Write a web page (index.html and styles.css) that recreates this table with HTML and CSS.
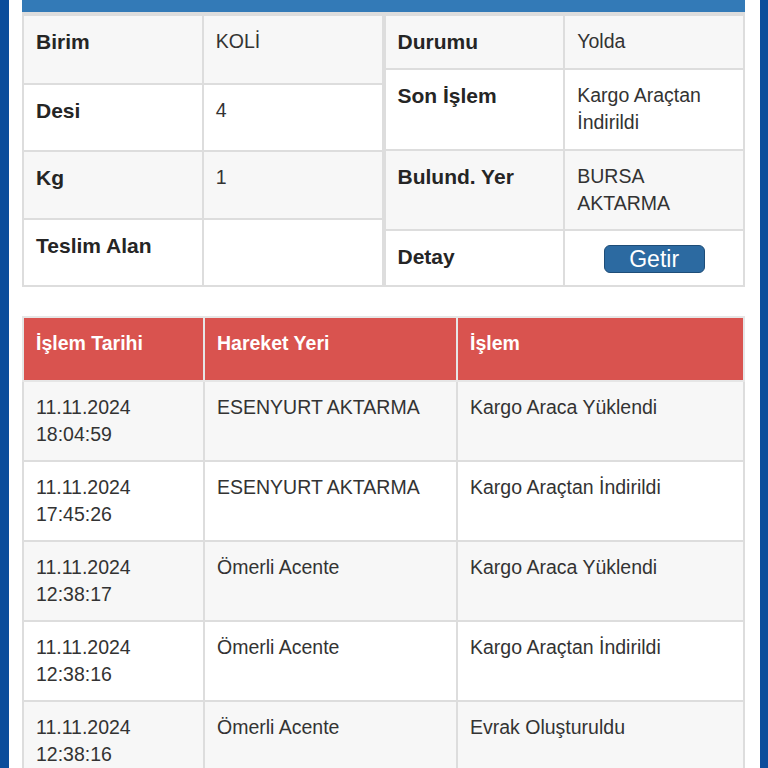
FILE: index.html
```html
<!DOCTYPE html>
<html lang="tr">
<head>
<meta charset="utf-8">
<title>Kargo Takip</title>
<link rel="stylesheet" href="styles.css">
</head>
<body>
<div class="side side-left"></div>
<main class="main">
  <div class="panel-head"></div>
  <div class="info">
    <table class="info-table">
      <tr class="odd"><th>Birim</th><td>KOLİ</td></tr>
      <tr><th>Desi</th><td>4</td></tr>
      <tr class="odd"><th>Kg</th><td>1</td></tr>
      <tr><th>Teslim Alan</th><td></td></tr>
    </table>
    <table class="info-table">
      <tr class="odd"><th>Durumu</th><td>Yolda</td></tr>
      <tr class="tall"><th>Son İşlem</th><td>Kargo Araçtan İndirildi</td></tr>
      <tr class="odd"><th>Bulund. Yer</th><td>BURSA AKTARMA</td></tr>
      <tr><th>Detay</th><td class="center"><button class="btn">Getir</button></td></tr>
    </table>
  </div>
  <table class="moves">
    <colgroup><col class="c1"><col class="c2"><col class="c3"></colgroup>
    <thead>
      <tr><th>İşlem Tarihi</th><th>Hareket Yeri</th><th>İşlem</th></tr>
    </thead>
    <tbody>
      <tr class="odd"><td>11.11.2024<br>18:04:59</td><td>ESENYURT AKTARMA</td><td>Kargo Araca Yüklendi</td></tr>
      <tr><td>11.11.2024<br>17:45:26</td><td>ESENYURT AKTARMA</td><td>Kargo Araçtan İndirildi</td></tr>
      <tr class="odd"><td>11.11.2024<br>12:38:17</td><td>Ömerli Acente</td><td>Kargo Araca Yüklendi</td></tr>
      <tr><td>11.11.2024<br>12:38:16</td><td>Ömerli Acente</td><td>Kargo Araçtan İndirildi</td></tr>
      <tr class="odd"><td>11.11.2024<br>12:38:16</td><td>Ömerli Acente</td><td>Evrak Oluşturuldu</td></tr>
    </tbody>
  </table>
</main>
<div class="side side-right"></div>
</body>
</html>
```
FILE: styles.css
```css
html, body {
  margin: 0;
  padding: 0;
  background: #fff;
}
body {
  display: flex;
  min-height: 100vh;
  font-family: "Liberation Sans", Arial, Helvetica, sans-serif;
  font-size: 19.5px;
  line-height: 27px;
  color: #333;
}
.side {
  flex: none;
  background: #0b4d9b;
}
.side-left { width: 9px; }
.side-right { width: 8px; }
.main {
  flex: 1;
  margin: 0 15px 0 13px;
  min-width: 0;
}
.panel-head {
  height: 12px;
  background: #337ab7;
}
.info {
  display: flex;
}
.info-table {
  flex: 1;
  width: 50%;
  border-collapse: collapse;
  border: 2px solid #dddddd;
  border-top-width: 4px;
  table-layout: fixed;
}
.info-table th,
.info-table td {
  border: 2px solid #dddddd;
  padding: 12px 12px;
  vertical-align: top;
  text-align: left;
  width: 50%;
}
.info-table tr:first-child th,
.info-table tr:first-child td {
  border-top-width: 4px;
  padding-bottom: 13px;
}
.info-table .tall th,
.info-table .tall td {
  padding-bottom: 13px;
}
.info-table th {
  font-weight: bold;
  font-size: 21px;
  color: #252525;
}
.odd { background: #f7f7f7; }
.center { text-align: center !important; }
.btn {
  display: inline-block;
  width: 101px;
  height: 28px;
  margin: 2px 0 0;
  padding: 0;
  border: 1px solid #1e4d78;
  border-radius: 6px;
  background: #2c6aa1;
  color: #fff;
  font-family: inherit;
  font-size: 23px;
  line-height: 26px;
  vertical-align: top;
}
.moves {
  width: 100%;
  margin-top: 29px;
  border-collapse: collapse;
  table-layout: fixed;
  border: 2px solid #dddddd;
}
.c1 { width: 181px; }
.c2 { width: 253px; }
.moves th,
.moves td {
  border: 2px solid #dddddd;
  text-align: left;
  vertical-align: top;
  padding: 12px 12px;
}
.moves th {
  background: #d9534f;
  color: #fff;
  font-weight: bold;
  padding: 12px 12px 23px;
  border-color: #e6e6e6;
}
```
